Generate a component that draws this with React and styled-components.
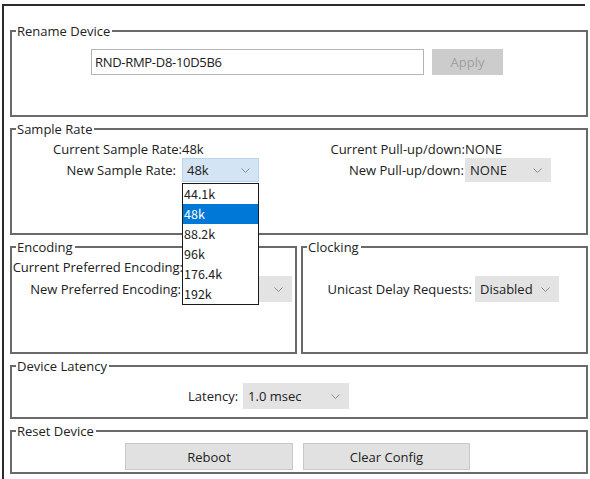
import styled, { createGlobalStyle } from 'styled-components';

const GlobalStyle = createGlobalStyle`
  html, body {
    margin: 0;
    padding: 0;
    background: #ffffff;
  }
  body {
    font-family: "Open Sans", "Noto Sans", sans-serif;
    font-size: 13px;
    color: #202020;
  }
`;

const Page = styled.div`
  padding: 4px 0 0 2px;
  height: 479px;
  box-sizing: border-box;
  overflow: hidden;
`;

const Frame = styled.div`
  width: 583px;
  height: 480px;
  box-sizing: border-box;
  border-top: 2px solid #2b2b2b;
  border-left: 2px solid #2b2b2b;
  padding: 16px 0 0 6px;
`;

const Column = styled.div`
  width: 578px;
  display: flex;
  flex-direction: column;
  gap: 3px;
`;

const Split = styled.div`
  display: flex;
  gap: 4px;
`;

const Group = styled.fieldset`
  margin: 0;
  min-width: 0;
  box-sizing: border-box;
  width: ${(p) => p.$width || '100%'};
  height: ${(p) => p.$height}px;
  border: 2px solid #6a6a6a;
  padding: ${(p) => p.$pad || '0'};
`;

const Legend = styled.legend`
  margin-left: 4px;
  padding: 0 2px 0 1px;
  line-height: 18px;
  color: #222;
`;

const Row = styled.div`
  display: flex;
  align-items: center;
  gap: ${(p) => p.$gap || 0}px;
  padding-left: ${(p) => p.$indent || 0}px;
`;

const Columns = styled.div`
  display: flex;
`;

const PropGrid = styled.div`
  display: grid;
  grid-template-columns: ${(p) => p.$label}px auto;
  align-items: center;
  width: ${(p) => p.$width || 'auto'};
`;

const Label = styled.span`
  display: flex;
  justify-content: flex-end;
  white-space: nowrap;
  line-height: 18px;
  min-height: 18px;
  overflow: hidden;
  padding-right: ${(p) => p.$gap || 0}px;
`;

const Value = styled.span`
  line-height: 18px;
  white-space: nowrap;
`;

const TextBox = styled.div`
  width: 333px;
  height: 26px;
  box-sizing: border-box;
  border: 1px solid #b4b4b4;
  background: #fff;
  display: flex;
  align-items: center;
  padding-left: 3px;
  letter-spacing: -0.3px;
`;

const Button = styled.button`
  font: inherit;
  width: ${(p) => p.$width}px;
  height: ${(p) => p.$height || 27}px;
  border: 1px solid ${(p) => (p.disabled ? '#cccccc' : '#c8c8c8')};
  background: ${(p) => (p.disabled ? '#cccccc' : '#e1e1e1')};
  color: ${(p) => (p.disabled ? '#a0a0a0' : '#222')};
  padding: 0;
`;

const SelectWrap = styled.div`
  position: relative;
`;

const Select = styled.div`
  width: ${(p) => p.$width}px;
  height: ${(p) => p.$height || 25}px;
  box-sizing: border-box;
  display: flex;
  align-items: center;
  justify-content: space-between;
  padding: 0 8px 0 4px;
  background: ${(p) => (p.$focused ? '#d3e5f5' : '#e3e3e3')};
  border: 1px solid ${(p) => (p.$focused ? '#b9d4ec' : '#e3e3e3')};
  white-space: nowrap;
`;

const List = styled.ul`
  position: absolute;
  top: 100%;
  left: 0;
  z-index: 10;
  width: 77px;
  margin: 1px 0 0;
  padding: 0;
  list-style: none;
  background: #fff;
  border: 1px solid #1a1a1a;
  box-sizing: border-box;
`;

const Item = styled.li`
  height: 20px;
  line-height: 20px;
  padding-left: 1px;
  font-family: "Noto Sans CJK SC", "Open Sans", sans-serif;
  font-size: 12.5px;
  background: ${(p) => (p.$active ? '#0078d7' : 'transparent')};
  color: ${(p) => (p.$active ? '#fff' : '#222')};
`;

const Chevron = () => (
  <svg width="9" height="5" viewBox="0 0 9 5">
    <path d="M0.5 0.5 L4.5 4.5 L8.5 0.5" fill="none" stroke="#8a8a8a" strokeWidth="1" />
  </svg>
);

const rates = ['44.1k', '48k', '88.2k', '96k', '176.4k', '192k'];

function Dropdown({ value, width, height, focused, options, active }) {
  return (
    <SelectWrap>
      <Select $width={width} $height={height} $focused={focused}>
        <span>{value}</span>
        <Chevron />
      </Select>
      {options && (
        <List>
          {options.map((o) => (
            <Item key={o} $active={o === active}>{o}</Item>
          ))}
        </List>
      )}
    </SelectWrap>
  );
}

export default function App() {
  return (
    <>
      <GlobalStyle />
      <Page>
        <Frame>
          <Column>
            <Group $height={95} $pad="9px 0 0 0">
              <Legend>Rename Device</Legend>
              <Row $indent={79} $gap={8}>
                <TextBox>RND-RMP-D8-10D5B6</TextBox>
                <Button disabled $width={71} $height={26}>Apply</Button>
              </Row>
            </Group>

            <Group $height={115} $pad="2px 0 0 0">
              <Legend>Sample Rate</Legend>
              <Columns>
                <PropGrid $label={170} $width="280px">
                  <Label>Current Sample Rate:</Label>
                  <Value>48k</Value>
                  <Label $gap={6}>New Sample Rate:</Label>
                  <Dropdown value="48k" width={77} height={24} focused options={rates} active="48k" />
                </PropGrid>
                <PropGrid $label={173}>
                  <Label>Current Pull-up/down:</Label>
                  <Value>NONE</Value>
                  <Label $gap={1}>New Pull-up/down:</Label>
                  <Dropdown value="NONE" width={86} height={24} />
                </PropGrid>
              </Columns>
            </Group>

            <Split>
              <Group $width="287px" $height={116} $pad="2px 0 0 0">
                <Legend>Encoding</Legend>
                <PropGrid $label={171}>
                  <Label>Current Preferred Encoding:</Label>
                  <Value />
                  <Label $gap={2}>New Preferred Encoding:</Label>
                  <Dropdown value="" width={109} height={26} />
                </PropGrid>
              </Group>
              <Group $width="287px" $height={116} $pad="20px 0 0 0">
                <Legend>Clocking</Legend>
                <PropGrid $label={172}>
                  <Label $gap={3}>Unicast Delay Requests:</Label>
                  <Dropdown value="Disabled" width={84} height={26} />
                </PropGrid>
              </Group>
            </Split>

            <Group $height={62} $pad="8px 0 0 0">
              <Legend>Device Latency</Legend>
              <Row $indent={176} $gap={5}>
                <Value>Latency:</Value>
                <Dropdown value="1.0 msec" width={106} height={26} />
              </Row>
            </Group>

            <Group $height={52} $pad="3px 0 0 0">
              <Legend>Reset Device</Legend>
              <Row $indent={113} $gap={10}>
                <Button $width={168}>Reboot</Button>
                <Button $width={167}>Clear Config</Button>
              </Row>
            </Group>
          </Column>
        </Frame>
      </Page>
    </>
  );
}
